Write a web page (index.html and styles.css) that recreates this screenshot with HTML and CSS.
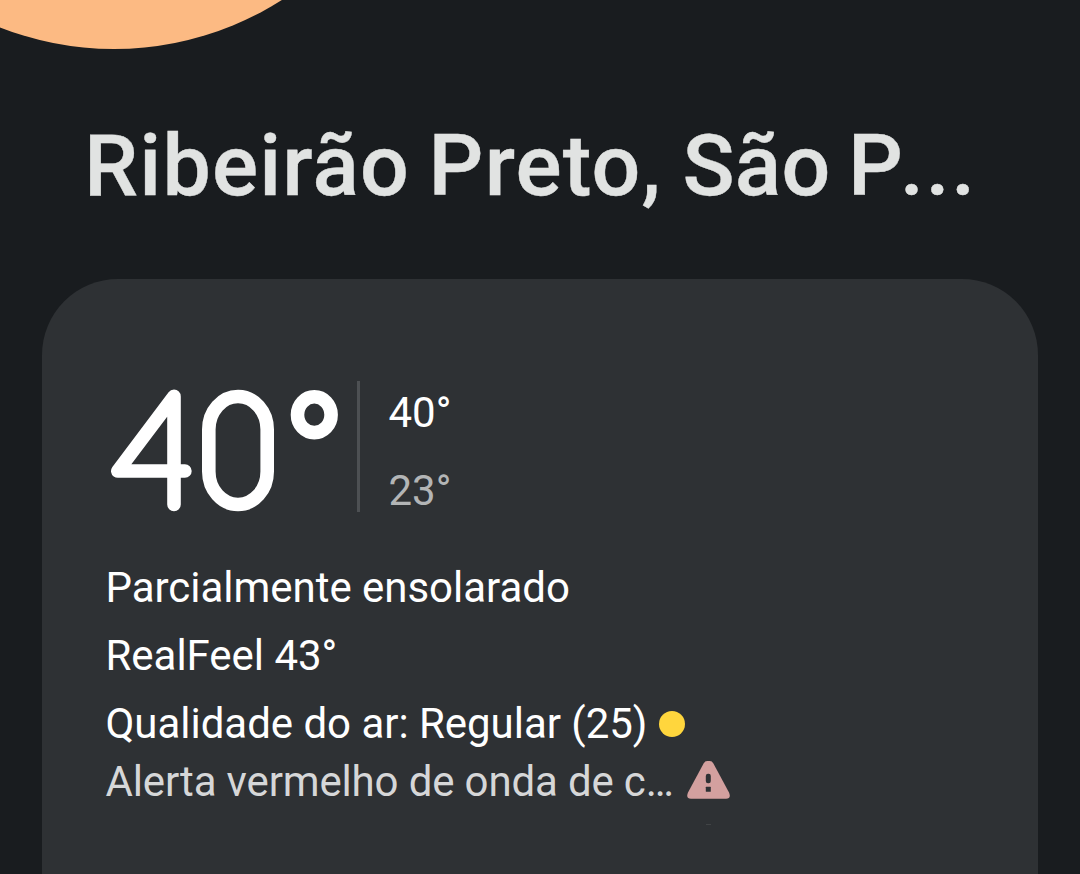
FILE: index.html
```html
<!DOCTYPE html>
<html lang="pt-BR">
<head>
<meta charset="utf-8">
<title>Clima</title>
<link rel="stylesheet" href="styles.css">
</head>
<body>
<main class="screen">
  <div class="sun"></div>
  <h1 class="city">Ribeirão Preto, <span class="state">São P</span><span class="dots">...</span></h1>
  <section class="card">
    <div class="current">
      <svg class="temp" viewBox="0 0 232 126" role="img" aria-label="40°">
        <g fill="none" stroke="#fff" stroke-width="13.6" stroke-linecap="round" stroke-linejoin="round">
          <path d="M64 118.5V10.4L7.8 85H74.9"/>
          <rect x="98.8" y="10.5" width="58.4" height="108" rx="29.2" ry="33"/>
          <ellipse cx="204.3" cy="28.7" rx="16.8" ry="17.9"/>
        </g>
      </svg>
      <div class="range"><span>40°</span><span class="low">23°</span></div>
    </div>
    <p class="line condition">Parcialmente ensolarado</p>
    <p class="line feel">RealFeel 43°</p>
    <p class="line air"><span>Qualidade do ar: Regular (25)</span><i class="dot"></i></p>
    <p class="line alert"><span>Alerta vermelho de onda de c…</span>
      <svg class="warn" viewBox="0 0 43 38"><path fill="#d3a09f" d="M16.6 2.4Q18 0 20.200 0h2.600Q25 0 26.400 2.400L42 31.500Q44.500 37.700 39 37.700H4Q-1.500 37.700 1 31.500Z"/><rect x="18.800" y="12.700" width="5" height="9.600" rx="2.200" fill="#2e3134"/><rect x="18.800" y="25.700" width="5" height="5" rx=".5" fill="#2e3134"/></svg>
    </p>
    <div class="speck"></div>
  </section>
</main>
</body>
</html>
```
FILE: styles.css
```css
* { box-sizing: border-box; }
body { margin: 0; background: #191c1f; }
.screen { position: relative; width: 1080px; height: 874px; overflow: hidden; padding: 122px 42px 0; font-family: Roboto, sans-serif; color: #fff; }
.sun { position: absolute; left: -198px; top: -575.5px; width: 624px; height: 624px; border-radius: 50%; background: #fcba83; }
.city { margin: 0 0 0 42px; height: 157px; font-size: 86px; line-height: 88px; font-weight: 500; letter-spacing: 1.2px; word-spacing: -4px; color: #e1e3e2; white-space: nowrap; -webkit-text-stroke: 0.4px #e1e3e2; }
.state { margin-left: 2px; letter-spacing: 0.2px; }
.dots { margin-left: -3px; letter-spacing: 1.7px; }
.card { height: 700px; padding: 102px 64px 0 63.5px; border-radius: 76px; background: #2e3134; }
.current { display: flex; height: 131px; }
.temp { width: 232px; height: 126px; margin: 5px 0 0 4.5px; }
.range { display: flex; flex-direction: column; gap: 28px; height: 131px; margin-left: 15px; padding: 7px 0 0 28.500px; border-left: 3px solid #4d5053; font-size: 42px; line-height: 50px; }
.low { color: #b3b5b6; }
.line { display: flex; align-items: center; margin: 0; font-size: 42px; line-height: 50px; height: 50px; letter-spacing: -0.03px; white-space: nowrap; }
.condition { margin-top: 51px; }
.feel, .air { margin-top: 18px; }
.dot { width: 26px; height: 26px; margin-left: 12px; border-radius: 50%; background: #ffd63d; }
.alert { margin-top: 8px; letter-spacing: -0.15px; color: #d6d7d8; }
.warn { width: 43px; height: 38px; margin: 0 0 4px 13px; }
.speck { width: 5px; height: 1px; margin: 17px 0 0 600px; background: #414446; }
```
